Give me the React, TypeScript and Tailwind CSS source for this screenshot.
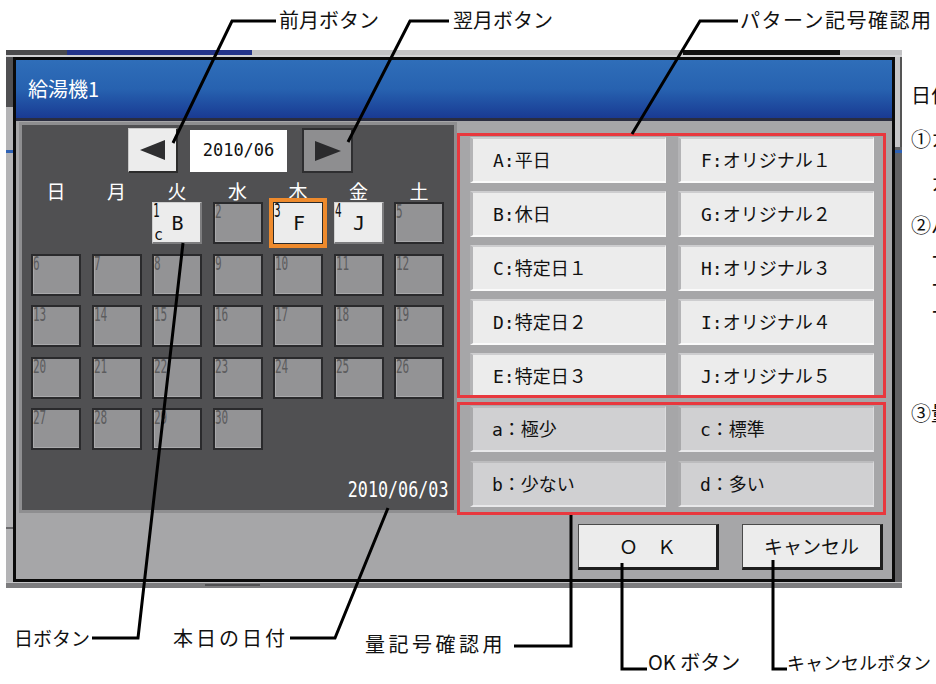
import React from 'react';

type Info = { letter: string; sub?: string; sel?: boolean };

const active: Record<number, Info> = {
  1: { letter: 'B', sub: 'c' },
  3: { letter: 'F', sel: true },
  4: { letter: 'J' },
};

function DayCell({ day }: { day: number | null }) {
  if (!day) return <div className="h-[42px] w-[50px]" />;
  const info = active[day];
  if (!info) {
    return (
      <div className="relative h-[42px] w-[50px] border-2 border-[#2a2a2c] bg-[#939395] shadow-[inset_1px_-1px_0_#a9a9ab]">
        <span className="absolute left-0 top-[-3px] inline-block origin-top-left scale-x-[0.55] font-['DejaVu_Sans_Mono',monospace] text-[20px] leading-[20px] text-[#5c5c5e] slashed-zero">
          {day}
        </span>
      </div>
    );
  }
  return (
    <div
      className={
        info.sel
          ? 'relative flex h-[42px] w-[50px] items-center justify-center border border-[#2a2a2a] bg-[#ececec] ring-4 ring-[#ee8a2c]'
          : 'relative flex h-[42px] w-[50px] items-center justify-center border-t border-l border-r-2 border-b-2 border-t-[#cfcfcf] border-l-[#cfcfcf] border-r-[#7d7d7f] border-b-[#7d7d7f] bg-[#ececec]'
      }
    >
      <span className="absolute left-0 top-[-3px] inline-block origin-top-left scale-x-[0.55] font-['DejaVu_Sans_Mono',monospace] text-[20px] leading-[20px] text-[#111]">
        {day}
      </span>
      {info.sub && (
        <span className="absolute bottom-[-1px] left-[1px] font-['DejaVu_Sans_Mono',monospace] text-[15px] leading-[15px] text-[#111]">
          {info.sub}
        </span>
      )}
      <span className="ml-[2px] font-['DejaVu_Sans_Mono',monospace] text-[20px] leading-[22px] text-[#111]">{info.letter}</span>
    </div>
  );
}

function Calendar() {
  const cells: (number | null)[] = [null, null];
  for (let d = 1; d <= 30; d++) cells.push(d);
  while (cells.length < 35) cells.push(null);
  const week = ['日', '月', '火', '水', '木', '金', '土'];
  return (
    <div className="ml-[3px] mt-[1px] flex h-[391px] w-[438px] flex-col border-[3px] border-[#8e8e90] bg-[#505052]">
      <div className="ml-[106px] mt-[3px] flex h-[45px] items-center">
        <div className="flex h-[45px] w-[50px] items-center justify-center border-t border-l border-r-2 border-b-2 border-t-[#c8c8c8] border-l-[#c8c8c8] border-r-[#2c2c2c] border-b-[#2c2c2c] bg-[#ececec]">
          <svg width="25" height="20" viewBox="0 0 25 20">
            <polygon points="25,0 25,20 0,10" fill="#2e2e30" />
          </svg>
        </div>
        <div className="ml-[12px] flex h-[42px] w-[97px] items-center justify-center bg-white font-['DejaVu_Sans_Mono',monospace] text-[17px] text-[#111] slashed-zero">
          2010/06
        </div>
        <div className="ml-[15px] flex h-[45px] w-[51px] items-center justify-center border-2 border-[#2e2e30] bg-[#8e8e90]">
          <svg width="26" height="20" viewBox="0 0 26 20">
            <polygon points="0,0 0,20 26,10" fill="#2a2a2c" />
          </svg>
        </div>
      </div>
      <div className="mt-[7px] grid h-[22px] grid-cols-[repeat(7,50px)] gap-x-[10.5px] pl-[9px]">
        {week.map((w) => (
          <div key={w} className="text-center font-['Noto_Sans_CJK_JP',sans-serif] text-[19px] leading-[22px] text-white">
            {w}
          </div>
        ))}
      </div>
      <div className="grid grid-cols-[repeat(7,50px)] grid-rows-[repeat(5,42px)] gap-x-[10.5px] gap-y-[9.5px] pl-[9px]">
        {cells.map((d, i) => (
          <DayCell key={i} day={d} />
        ))}
      </div>
      <div className="mt-[28px] flex justify-end pr-[6px]">
        <span className="inline-block origin-right scale-x-[0.76] font-['DejaVu_Sans_Mono',monospace] text-[22px] leading-[24px] text-white slashed-zero">
          2010/06/03
        </span>
      </div>
    </div>
  );
}

const patLeft = ['A:平日', 'B:休日', 'C:特定日１', 'D:特定日２', 'E:特定日３'];
const patRight = ['F:オリジナル１', 'G:オリジナル２', 'H:オリジナル３', 'I:オリジナル４', 'J:オリジナル５'];
const qty = ['a：極少', 'c：標準', 'b：少ない', 'd：多い'];

function PatButton({ label }: { label: string }) {
  return (
    <div className="flex h-[46px] w-[196px] shrink-0 items-center border-l-[3px] border-t-2 border-b-2 border-r border-l-[#b4b4b6] border-t-[#cdcdcf] border-b-[#fafafa] border-r-[#f4f4f4] bg-[#ececec] pl-[20px] font-['DejaVu_Sans_Mono','Noto_Sans_CJK_JP',monospace] text-[18px] text-[#111]">
      {label}
    </div>
  );
}

function QtyButton({ label }: { label: string }) {
  return (
    <div className="flex h-[46px] w-[196px] items-center border-l-[3px] border-t-2 border-b-2 border-r border-l-[#a9a9ab] border-t-[#bcbcbe] border-b-[#e8e8ea] border-r-[#dcdcde] bg-[#d0d0d2] pl-[19px] font-['DejaVu_Sans_Mono','Noto_Sans_CJK_JP',monospace] text-[18px] text-[#111]">
      {label}
    </div>
  );
}

function RightPanel() {
  return (
    <div className="mt-[12px] flex w-[429px] flex-col">
      <div className="h-[265px] overflow-hidden border-[3px] border-[#e8383e]">
        <div className="grid grid-cols-[196px_196px] gap-x-[12px] gap-y-[8px] pl-[10px] pt-[1px]">
          {patLeft.map((l, i) => (
            <React.Fragment key={l}>
              <PatButton label={l} />
              <PatButton label={patRight[i]} />
            </React.Fragment>
          ))}
        </div>
      </div>
      <div className="mt-[4px] h-[113px] border-[3px] border-[#e8383e]">
        <div className="grid grid-cols-[196px_196px] gap-x-[12px] gap-y-[9px] pl-[10px] pt-[1px]">
          {qty.map((q) => (
            <QtyButton key={q} label={q} />
          ))}
        </div>
      </div>
    </div>
  );
}

function Dialog() {
  return (
    <div className="flex h-[525px] w-[882px] flex-col border-[3px] border-[#0a0a0a] bg-[#a6a6a8]">
      <div className="flex h-[61px] shrink-0 items-center border-b-[3px] border-b-[#2a2d40] bg-linear-to-b from-[#2f6eb9] via-[#2762b0] to-[#1a3a93] pl-[12px] font-['Noto_Sans_CJK_JP',sans-serif] text-[20px] text-white">
        給湯機1
      </div>
      <div className="flex flex-1 flex-col">
        <div className="flex">
          <Calendar />
          <RightPanel />
        </div>
        <div className="mt-[9px] flex">
          <div className="ml-[562px] flex h-[46px] w-[141px] items-center justify-center border-t border-l border-r-[3px] border-b-[3px] border-t-[#4a4a4a] border-l-[#4a4a4a] border-r-[#1e1e1e] border-b-[#1e1e1e] bg-[#ececec] font-['Noto_Sans_CJK_JP',sans-serif] text-[19px] text-[#111]">
            Ｏ　Ｋ
          </div>
          <div className="ml-[23px] flex h-[46px] w-[141px] items-center justify-center border-t border-l border-r-[3px] border-b-[3px] border-t-[#4a4a4a] border-l-[#4a4a4a] border-r-[#1e1e1e] border-b-[#1e1e1e] bg-[#ececec] font-['Noto_Sans_CJK_JP',sans-serif] text-[19px] text-[#111]">
            キャンセル
          </div>
        </div>
      </div>
    </div>
  );
}

function Screen() {
  return (
    <div className="flex w-[896px] flex-col">
      <div className="flex h-[7px] flex-col bg-[#d2d2d4]">
        <div className="flex h-[5px]">
          <div className="w-[61px] bg-[#4a4a4c]" />
          <div className="w-[185px] bg-[#25358a]" />
          <div className="w-[431px] bg-[#c2c2c4]" />
          <div className="w-[157px] bg-[#111]" />
          <div className="w-[62px] bg-[#c2c2c4]" />
        </div>
      </div>
      <div className="flex h-[525px]">
        <div className="flex w-[7px] flex-col bg-[#b4b4b6]">
          <div className="h-[50px] bg-[#505052]" />
          <div className="mt-[43px] h-[3px] bg-[#2f62b4]" />
          <div className="mt-[374px] h-[2px] bg-[#6a6a6c]" />
        </div>
        <Dialog />
        <div className="flex w-[7px] flex-col bg-[#626264]">
          <div className="h-[90px] border-r-2 border-r-[#555] bg-[#c6c6c8]" />
          <div className="mt-[3px] h-[3px] bg-[#2f62b4]" />
        </div>
      </div>
      <div className="flex h-[6px] flex-col bg-[#7c7c7e]">
        <div className="h-[1px] bg-[#c4c4c6]" />
        <div className="ml-[199px] mt-[1px] h-[2px] w-[55px] bg-[#505052]" />
      </div>
    </div>
  );
}

const lab = "absolute h-[28px] whitespace-nowrap font-['Noto_Sans_CJK_JP',sans-serif] leading-[28px] text-[#111]";

function Annotations() {
  return (
    <>
      <svg className="pointer-events-none absolute left-0 top-0" width="936" height="684">
        <g fill="none" stroke="#000" strokeWidth="3" strokeLinejoin="miter">
          <polyline points="276,21 232,21 173,143" />
          <polyline points="449,21 410,21 348,142" />
          <polyline points="738,21 700,21 632,134" />
          <polyline points="92,638 138,638 183,243" />
          <polyline points="290,638 335,638 388,508" />
          <polyline points="514,646 571,646 571,515" />
          <polyline points="622,563 622,669 647,669" />
          <polyline points="773,560 773,669 787,669" />
        </g>
      </svg>
      <div className={lab + ' left-[279px] top-[6px] text-[20px]'}>前月ボタン</div>
      <div className={lab + ' left-[453px] top-[6px] text-[20px]'}>翌月ボタン</div>
      <div className={lab + ' left-[740px] top-[6px] text-[20px] tracking-[1.5px]'}>パターン記号確認用</div>
      <div className={lab + ' left-[14px] top-[624px] text-[19px]'}>日ボタン</div>
      <div className={lab + ' left-[173px] top-[624px] text-[20px] tracking-[3px]'}>本日の日付</div>
      <div className={lab + ' left-[365px] top-[630px] text-[20px] tracking-[3.5px]'}>量記号確認用</div>
      <div className={lab + ' left-[648px] top-[648px] text-[20px]'}>OK ボタン</div>
      <div className={lab + ' left-[787px] top-[648px] text-[18px]'}>キャンセルボタン</div>
      <div className={lab + ' left-[911px] top-[81px] text-[20px]'}>日付設定</div>
      <div className={lab + ' left-[911px] top-[125px] text-[20px]'}>①カレンダー</div>
      <div className={lab + ' left-[931px] top-[169px] text-[20px]'}>カレンダー</div>
      <div className={lab + ' left-[911px] top-[211px] text-[20px]'}>②パターン</div>
      <div className={lab + ' left-[931px] top-[243px] text-[20px]'}>ー</div>
      <div className={lab + ' left-[931px] top-[271px] text-[20px]'}>ー</div>
      <div className={lab + ' left-[931px] top-[298px] text-[20px]'}>ー</div>
      <div className={lab + ' left-[911px] top-[399px] text-[20px]'}>③量</div>
    </>
  );
}

export default function App() {
  return (
    <div className="relative h-[684px] w-[936px] overflow-hidden bg-white">
      <div className="pl-[6px] pt-[50px]">
        <Screen />
      </div>
      <Annotations />
    </div>
  );
}
